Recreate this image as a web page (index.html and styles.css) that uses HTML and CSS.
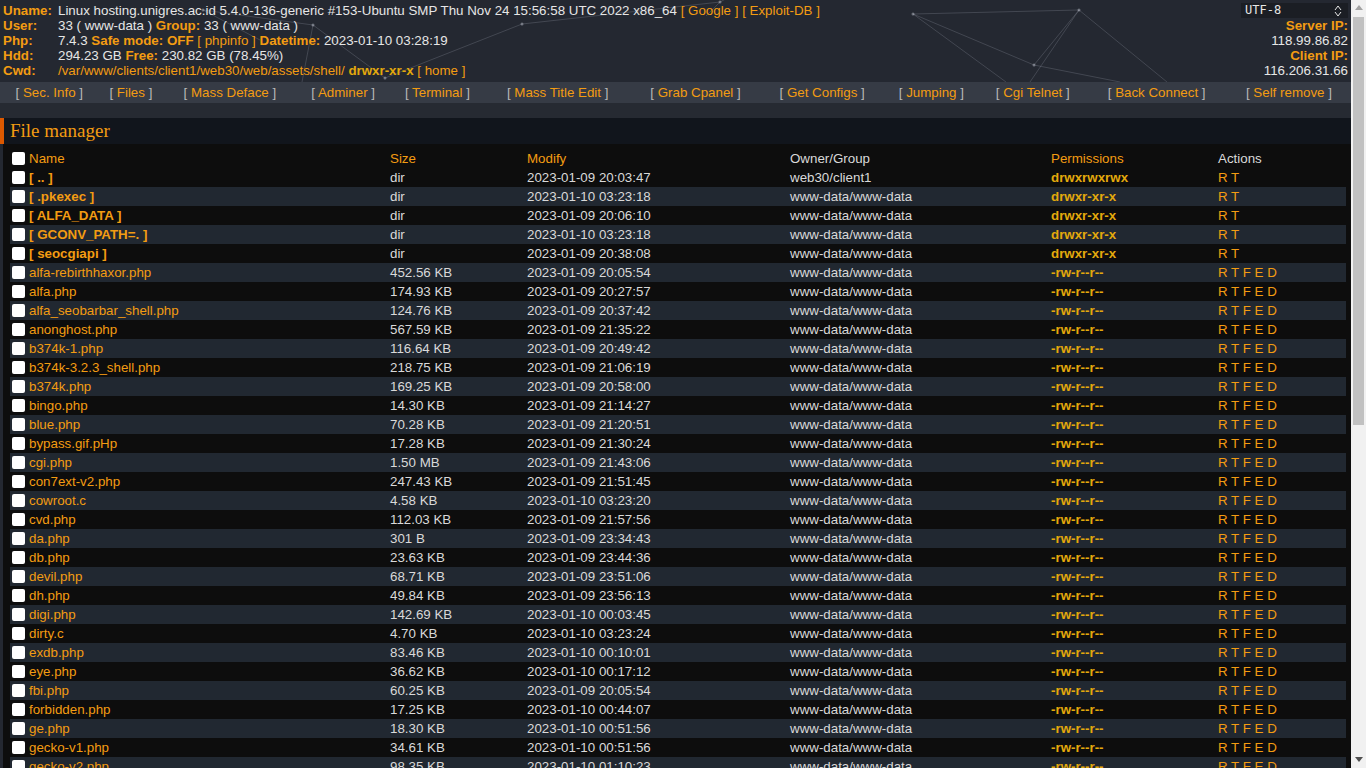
FILE: index.html
```html
<!DOCTYPE html>
<html lang="en">
<head>
<meta charset="utf-8">
<title>File manager</title>
<link rel="stylesheet" href="styles.css">
</head>
<body>
<div class="page">
<header class="top">
  <svg class="particles" width="1351" height="82" viewBox="0 0 1351 82">
    <g class="pl">
      <line x1="913" y1="14" x2="1079" y2="10"/>
      <line x1="913" y1="14" x2="1034" y2="65"/>
      <line x1="913" y1="14" x2="1006" y2="82"/>
      <line x1="1079" y1="10" x2="1034" y2="65"/>
      <line x1="1079" y1="10" x2="1030" y2="82"/>
      <line x1="1079" y1="10" x2="1167" y2="82"/>
      <line x1="1034" y1="65" x2="1120" y2="82"/>
      <line x1="203" y1="10" x2="313" y2="25"/>
      <line x1="313" y1="25" x2="385" y2="78"/>
      <line x1="522" y1="24" x2="385" y2="78"/>
      <line x1="313" y1="25" x2="302" y2="82"/>
      <line x1="203" y1="10" x2="260" y2="40"/>
      <line x1="720" y1="2" x2="735" y2="-6"/>
      <line x1="720" y1="2" x2="706" y2="16"/>
      <line x1="522" y1="24" x2="720" y2="2"/>
    </g>
    <g class="pd">
      <circle cx="913" cy="14" r="1.5"/>
      <circle cx="1079" cy="10" r="1.5"/>
      <circle cx="1034" cy="65" r="1.5"/>
      <circle cx="203" cy="10" r="1.5"/>
      <circle cx="313" cy="25" r="1.5"/>
      <circle cx="522" cy="24" r="1.5"/>
      <circle cx="385" cy="78" r="1.5"/>
      <circle cx="720" cy="2" r="1.5"/>
    </g>
  </svg>
  <div class="info">
    <b class="lbl">Uname:</b>
    <span>Linux hosting.unigres.ac.id 5.4.0-136-generic #153-Ubuntu SMP Thu Nov 24 15:56:58 UTC 2022 x86_64 <a href="#">[ Google ]</a> <a href="#">[ Exploit-DB ]</a></span>
    <b class="lbl">User:</b>
    <span>33 ( www-data ) <b class="lbl">Group:</b> 33 ( www-data )</span>
    <b class="lbl">Php:</b>
    <span>7.4.3 <b class="lbl">Safe mode:</b> <b class="lbl">OFF</b> <a href="#">[ phpinfo ]</a> <b class="lbl">Datetime:</b> 2023-01-10 03:28:19</span>
    <b class="lbl">Hdd:</b>
    <span>294.23 GB <b class="lbl">Free:</b> 230.82 GB (78.45%)</span>
    <b class="lbl">Cwd:</b>
    <span><a href="#">/var/www/clients/client1/web30/web/assets/shell/</a> <b class="perm">drwxr-xr-x</b> <a href="#">[ home ]</a></span>
  </div>
  <div class="side">
    <div class="charset">
      <select><option>UTF-8</option></select>
      <svg class="arrows" width="8" height="12" viewBox="0 0 8 12"><path d="M1 5 L4 1 L7 5 M1 7 L4 11 L7 7" fill="none" stroke="#e6e6e6" stroke-width="1"/></svg>
    </div>
    <b class="lbl">Server IP:</b>
    <span>118.99.86.82</span>
    <b class="lbl">Client IP:</b>
    <span>116.206.31.66</span>
  </div>
</header>

<nav class="menu">
  <a href="#"><i>[</i> Sec. Info <i>]</i></a>
  <a href="#"><i>[</i> Files <i>]</i></a>
  <a href="#"><i>[</i> Mass Deface <i>]</i></a>
  <a href="#"><i>[</i> Adminer <i>]</i></a>
  <a href="#"><i>[</i> Terminal <i>]</i></a>
  <a href="#"><i>[</i> Mass Title Edit <i>]</i></a>
  <a href="#"><i>[</i> Grab Cpanel <i>]</i></a>
  <a href="#"><i>[</i> Get Configs <i>]</i></a>
  <a href="#"><i>[</i> Jumping <i>]</i></a>
  <a href="#"><i>[</i> Cgi Telnet <i>]</i></a>
  <a href="#"><i>[</i> Back Connect <i>]</i></a>
  <a href="#"><i>[</i> Self remove <i>]</i></a>
</nav>
<div class="spacer"></div>
<h1 class="section-title">File manager</h1>

<div class="files">
<table>
  <colgroup>
    <col class="c-name"><col class="c-size"><col class="c-mod"><col class="c-own"><col class="c-perm"><col class="c-act">
  </colgroup>
  <thead>
    <tr><th><input type="checkbox" class="chk"><a href="#">Name</a></th><th><a href="#">Size</a></th><th><a href="#">Modify</a></th><th>Owner/Group</th><th><a href="#">Permissions</a></th><th>Actions</th></tr>
  </thead>
  <tbody>
    <tr><td><input type="checkbox" class="chk"><a class="dir" href="#">[ .. ]</a></td><td>dir</td><td>2023-01-09 20:03:47</td><td>web30/client1</td><td><b class="perm">drwxrwxrwx</b></td><td><a href="#">R</a> <a href="#">T</a></td></tr>
    <tr class="alt"><td><input type="checkbox" class="chk"><a class="dir" href="#">[ .pkexec ]</a></td><td>dir</td><td>2023-01-10 03:23:18</td><td>www-data/www-data</td><td><b class="perm">drwxr-xr-x</b></td><td><a href="#">R</a> <a href="#">T</a></td></tr>
    <tr><td><input type="checkbox" class="chk"><a class="dir" href="#">[ ALFA_DATA ]</a></td><td>dir</td><td>2023-01-09 20:06:10</td><td>www-data/www-data</td><td><b class="perm">drwxr-xr-x</b></td><td><a href="#">R</a> <a href="#">T</a></td></tr>
    <tr class="alt"><td><input type="checkbox" class="chk"><a class="dir" href="#">[ GCONV_PATH=. ]</a></td><td>dir</td><td>2023-01-10 03:23:18</td><td>www-data/www-data</td><td><b class="perm">drwxr-xr-x</b></td><td><a href="#">R</a> <a href="#">T</a></td></tr>
    <tr><td><input type="checkbox" class="chk"><a class="dir" href="#">[ seocgiapi ]</a></td><td>dir</td><td>2023-01-09 20:38:08</td><td>www-data/www-data</td><td><b class="perm">drwxr-xr-x</b></td><td><a href="#">R</a> <a href="#">T</a></td></tr>
    <tr class="alt"><td><input type="checkbox" class="chk"><a href="#">alfa-rebirthhaxor.php</a></td><td>452.56 KB</td><td>2023-01-09 20:05:54</td><td>www-data/www-data</td><td><b class="perm">-rw-r--r--</b></td><td><a href="#">R</a> <a href="#">T</a> <a href="#">F</a> <a href="#">E</a> <a href="#">D</a></td></tr>
    <tr><td><input type="checkbox" class="chk"><a href="#">alfa.php</a></td><td>174.93 KB</td><td>2023-01-09 20:27:57</td><td>www-data/www-data</td><td><b class="perm">-rw-r--r--</b></td><td><a href="#">R</a> <a href="#">T</a> <a href="#">F</a> <a href="#">E</a> <a href="#">D</a></td></tr>
    <tr class="alt"><td><input type="checkbox" class="chk"><a href="#">alfa_seobarbar_shell.php</a></td><td>124.76 KB</td><td>2023-01-09 20:37:42</td><td>www-data/www-data</td><td><b class="perm">-rw-r--r--</b></td><td><a href="#">R</a> <a href="#">T</a> <a href="#">F</a> <a href="#">E</a> <a href="#">D</a></td></tr>
    <tr><td><input type="checkbox" class="chk"><a href="#">anonghost.php</a></td><td>567.59 KB</td><td>2023-01-09 21:35:22</td><td>www-data/www-data</td><td><b class="perm">-rw-r--r--</b></td><td><a href="#">R</a> <a href="#">T</a> <a href="#">F</a> <a href="#">E</a> <a href="#">D</a></td></tr>
    <tr class="alt"><td><input type="checkbox" class="chk"><a href="#">b374k-1.php</a></td><td>116.64 KB</td><td>2023-01-09 20:49:42</td><td>www-data/www-data</td><td><b class="perm">-rw-r--r--</b></td><td><a href="#">R</a> <a href="#">T</a> <a href="#">F</a> <a href="#">E</a> <a href="#">D</a></td></tr>
    <tr><td><input type="checkbox" class="chk"><a href="#">b374k-3.2.3_shell.php</a></td><td>218.75 KB</td><td>2023-01-09 21:06:19</td><td>www-data/www-data</td><td><b class="perm">-rw-r--r--</b></td><td><a href="#">R</a> <a href="#">T</a> <a href="#">F</a> <a href="#">E</a> <a href="#">D</a></td></tr>
    <tr class="alt"><td><input type="checkbox" class="chk"><a href="#">b374k.php</a></td><td>169.25 KB</td><td>2023-01-09 20:58:00</td><td>www-data/www-data</td><td><b class="perm">-rw-r--r--</b></td><td><a href="#">R</a> <a href="#">T</a> <a href="#">F</a> <a href="#">E</a> <a href="#">D</a></td></tr>
    <tr><td><input type="checkbox" class="chk"><a href="#">bingo.php</a></td><td>14.30 KB</td><td>2023-01-09 21:14:27</td><td>www-data/www-data</td><td><b class="perm">-rw-r--r--</b></td><td><a href="#">R</a> <a href="#">T</a> <a href="#">F</a> <a href="#">E</a> <a href="#">D</a></td></tr>
    <tr class="alt"><td><input type="checkbox" class="chk"><a href="#">blue.php</a></td><td>70.28 KB</td><td>2023-01-09 21:20:51</td><td>www-data/www-data</td><td><b class="perm">-rw-r--r--</b></td><td><a href="#">R</a> <a href="#">T</a> <a href="#">F</a> <a href="#">E</a> <a href="#">D</a></td></tr>
    <tr><td><input type="checkbox" class="chk"><a href="#">bypass.gif.pHp</a></td><td>17.28 KB</td><td>2023-01-09 21:30:24</td><td>www-data/www-data</td><td><b class="perm">-rw-r--r--</b></td><td><a href="#">R</a> <a href="#">T</a> <a href="#">F</a> <a href="#">E</a> <a href="#">D</a></td></tr>
    <tr class="alt"><td><input type="checkbox" class="chk"><a href="#">cgi.php</a></td><td>1.50 MB</td><td>2023-01-09 21:43:06</td><td>www-data/www-data</td><td><b class="perm">-rw-r--r--</b></td><td><a href="#">R</a> <a href="#">T</a> <a href="#">F</a> <a href="#">E</a> <a href="#">D</a></td></tr>
    <tr><td><input type="checkbox" class="chk"><a href="#">con7ext-v2.php</a></td><td>247.43 KB</td><td>2023-01-09 21:51:45</td><td>www-data/www-data</td><td><b class="perm">-rw-r--r--</b></td><td><a href="#">R</a> <a href="#">T</a> <a href="#">F</a> <a href="#">E</a> <a href="#">D</a></td></tr>
    <tr class="alt"><td><input type="checkbox" class="chk"><a href="#">cowroot.c</a></td><td>4.58 KB</td><td>2023-01-10 03:23:20</td><td>www-data/www-data</td><td><b class="perm">-rw-r--r--</b></td><td><a href="#">R</a> <a href="#">T</a> <a href="#">F</a> <a href="#">E</a> <a href="#">D</a></td></tr>
    <tr><td><input type="checkbox" class="chk"><a href="#">cvd.php</a></td><td>112.03 KB</td><td>2023-01-09 21:57:56</td><td>www-data/www-data</td><td><b class="perm">-rw-r--r--</b></td><td><a href="#">R</a> <a href="#">T</a> <a href="#">F</a> <a href="#">E</a> <a href="#">D</a></td></tr>
    <tr class="alt"><td><input type="checkbox" class="chk"><a href="#">da.php</a></td><td>301 B</td><td>2023-01-09 23:34:43</td><td>www-data/www-data</td><td><b class="perm">-rw-r--r--</b></td><td><a href="#">R</a> <a href="#">T</a> <a href="#">F</a> <a href="#">E</a> <a href="#">D</a></td></tr>
    <tr><td><input type="checkbox" class="chk"><a href="#">db.php</a></td><td>23.63 KB</td><td>2023-01-09 23:44:36</td><td>www-data/www-data</td><td><b class="perm">-rw-r--r--</b></td><td><a href="#">R</a> <a href="#">T</a> <a href="#">F</a> <a href="#">E</a> <a href="#">D</a></td></tr>
    <tr class="alt"><td><input type="checkbox" class="chk"><a href="#">devil.php</a></td><td>68.71 KB</td><td>2023-01-09 23:51:06</td><td>www-data/www-data</td><td><b class="perm">-rw-r--r--</b></td><td><a href="#">R</a> <a href="#">T</a> <a href="#">F</a> <a href="#">E</a> <a href="#">D</a></td></tr>
    <tr><td><input type="checkbox" class="chk"><a href="#">dh.php</a></td><td>49.84 KB</td><td>2023-01-09 23:56:13</td><td>www-data/www-data</td><td><b class="perm">-rw-r--r--</b></td><td><a href="#">R</a> <a href="#">T</a> <a href="#">F</a> <a href="#">E</a> <a href="#">D</a></td></tr>
    <tr class="alt"><td><input type="checkbox" class="chk"><a href="#">digi.php</a></td><td>142.69 KB</td><td>2023-01-10 00:03:45</td><td>www-data/www-data</td><td><b class="perm">-rw-r--r--</b></td><td><a href="#">R</a> <a href="#">T</a> <a href="#">F</a> <a href="#">E</a> <a href="#">D</a></td></tr>
    <tr><td><input type="checkbox" class="chk"><a href="#">dirty.c</a></td><td>4.70 KB</td><td>2023-01-10 03:23:24</td><td>www-data/www-data</td><td><b class="perm">-rw-r--r--</b></td><td><a href="#">R</a> <a href="#">T</a> <a href="#">F</a> <a href="#">E</a> <a href="#">D</a></td></tr>
    <tr class="alt"><td><input type="checkbox" class="chk"><a href="#">exdb.php</a></td><td>83.46 KB</td><td>2023-01-10 00:10:01</td><td>www-data/www-data</td><td><b class="perm">-rw-r--r--</b></td><td><a href="#">R</a> <a href="#">T</a> <a href="#">F</a> <a href="#">E</a> <a href="#">D</a></td></tr>
    <tr><td><input type="checkbox" class="chk"><a href="#">eye.php</a></td><td>36.62 KB</td><td>2023-01-10 00:17:12</td><td>www-data/www-data</td><td><b class="perm">-rw-r--r--</b></td><td><a href="#">R</a> <a href="#">T</a> <a href="#">F</a> <a href="#">E</a> <a href="#">D</a></td></tr>
    <tr class="alt"><td><input type="checkbox" class="chk"><a href="#">fbi.php</a></td><td>60.25 KB</td><td>2023-01-09 20:05:54</td><td>www-data/www-data</td><td><b class="perm">-rw-r--r--</b></td><td><a href="#">R</a> <a href="#">T</a> <a href="#">F</a> <a href="#">E</a> <a href="#">D</a></td></tr>
    <tr><td><input type="checkbox" class="chk"><a href="#">forbidden.php</a></td><td>17.25 KB</td><td>2023-01-10 00:44:07</td><td>www-data/www-data</td><td><b class="perm">-rw-r--r--</b></td><td><a href="#">R</a> <a href="#">T</a> <a href="#">F</a> <a href="#">E</a> <a href="#">D</a></td></tr>
    <tr class="alt"><td><input type="checkbox" class="chk"><a href="#">ge.php</a></td><td>18.30 KB</td><td>2023-01-10 00:51:56</td><td>www-data/www-data</td><td><b class="perm">-rw-r--r--</b></td><td><a href="#">R</a> <a href="#">T</a> <a href="#">F</a> <a href="#">E</a> <a href="#">D</a></td></tr>
    <tr><td><input type="checkbox" class="chk"><a href="#">gecko-v1.php</a></td><td>34.61 KB</td><td>2023-01-10 00:51:56</td><td>www-data/www-data</td><td><b class="perm">-rw-r--r--</b></td><td><a href="#">R</a> <a href="#">T</a> <a href="#">F</a> <a href="#">E</a> <a href="#">D</a></td></tr>
    <tr class="alt"><td><input type="checkbox" class="chk"><a href="#">gecko-v2.php</a></td><td>98.35 KB</td><td>2023-01-10 01:10:23</td><td>www-data/www-data</td><td><b class="perm">-rw-r--r--</b></td><td><a href="#">R</a> <a href="#">T</a> <a href="#">F</a> <a href="#">E</a> <a href="#">D</a></td></tr>
    <tr><td><input type="checkbox" class="chk"><a href="#">gel4y.php</a></td><td>12.14 KB</td><td>2023-01-10 01:14:02</td><td>www-data/www-data</td><td><b class="perm">-rw-r--r--</b></td><td><a href="#">R</a> <a href="#">T</a> <a href="#">F</a> <a href="#">E</a> <a href="#">D</a></td></tr>
    <tr class="alt"><td><input type="checkbox" class="chk"><a href="#">haxor.php</a></td><td>45.20 KB</td><td>2023-01-10 01:20:37</td><td>www-data/www-data</td><td><b class="perm">-rw-r--r--</b></td><td><a href="#">R</a> <a href="#">T</a> <a href="#">F</a> <a href="#">E</a> <a href="#">D</a></td></tr>
    <tr><td><input type="checkbox" class="chk"><a href="#">hello.php</a></td><td>1.21 KB</td><td>2023-01-10 01:25:11</td><td>www-data/www-data</td><td><b class="perm">-rw-r--r--</b></td><td><a href="#">R</a> <a href="#">T</a> <a href="#">F</a> <a href="#">E</a> <a href="#">D</a></td></tr>
    <tr class="alt"><td><input type="checkbox" class="chk"><a href="#">idx.php</a></td><td>88.47 KB</td><td>2023-01-10 01:31:49</td><td>www-data/www-data</td><td><b class="perm">-rw-r--r--</b></td><td><a href="#">R</a> <a href="#">T</a> <a href="#">F</a> <a href="#">E</a> <a href="#">D</a></td></tr>
    <tr><td><input type="checkbox" class="chk"><a href="#">indoxploit.php</a></td><td>97.93 KB</td><td>2023-01-10 01:38:20</td><td>www-data/www-data</td><td><b class="perm">-rw-r--r--</b></td><td><a href="#">R</a> <a href="#">T</a> <a href="#">F</a> <a href="#">E</a> <a href="#">D</a></td></tr>
    <tr class="alt"><td><input type="checkbox" class="chk"><a href="#">jembut.php</a></td><td>23.10 KB</td><td>2023-01-10 01:44:05</td><td>www-data/www-data</td><td><b class="perm">-rw-r--r--</b></td><td><a href="#">R</a> <a href="#">T</a> <a href="#">F</a> <a href="#">E</a> <a href="#">D</a></td></tr>
    <tr><td><input type="checkbox" class="chk"><a href="#">kill.php</a></td><td>3.42 KB</td><td>2023-01-10 01:49:58</td><td>www-data/www-data</td><td><b class="perm">-rw-r--r--</b></td><td><a href="#">R</a> <a href="#">T</a> <a href="#">F</a> <a href="#">E</a> <a href="#">D</a></td></tr>
    <tr class="alt"><td><input type="checkbox" class="chk"><a href="#">leaf.php</a></td><td>61.77 KB</td><td>2023-01-10 01:55:30</td><td>www-data/www-data</td><td><b class="perm">-rw-r--r--</b></td><td><a href="#">R</a> <a href="#">T</a> <a href="#">F</a> <a href="#">E</a> <a href="#">D</a></td></tr>
    <tr><td><input type="checkbox" class="chk"><a href="#">lock.php</a></td><td>5.66 KB</td><td>2023-01-10 02:01:16</td><td>www-data/www-data</td><td><b class="perm">-rw-r--r--</b></td><td><a href="#">R</a> <a href="#">T</a> <a href="#">F</a> <a href="#">E</a> <a href="#">D</a></td></tr>
    <tr class="alt"><td><input type="checkbox" class="chk"><a href="#">marijuana.php</a></td><td>33.58 KB</td><td>2023-01-10 02:06:44</td><td>www-data/www-data</td><td><b class="perm">-rw-r--r--</b></td><td><a href="#">R</a> <a href="#">T</a> <a href="#">F</a> <a href="#">E</a> <a href="#">D</a></td></tr>
    <tr><td><input type="checkbox" class="chk"><a href="#">mini.php</a></td><td>9.84 KB</td><td>2023-01-10 02:12:09</td><td>www-data/www-data</td><td><b class="perm">-rw-r--r--</b></td><td><a href="#">R</a> <a href="#">T</a> <a href="#">F</a> <a href="#">E</a> <a href="#">D</a></td></tr>
    <tr class="alt"><td><input type="checkbox" class="chk"><a href="#">minishell.php</a></td><td>14.02 KB</td><td>2023-01-10 02:17:53</td><td>www-data/www-data</td><td><b class="perm">-rw-r--r--</b></td><td><a href="#">R</a> <a href="#">T</a> <a href="#">F</a> <a href="#">E</a> <a href="#">D</a></td></tr>
    <tr><td><input type="checkbox" class="chk"><a href="#">mrjn.php</a></td><td>27.41 KB</td><td>2023-01-10 02:23:31</td><td>www-data/www-data</td><td><b class="perm">-rw-r--r--</b></td><td><a href="#">R</a> <a href="#">T</a> <a href="#">F</a> <a href="#">E</a> <a href="#">D</a></td></tr>
    <tr class="alt"><td><input type="checkbox" class="chk"><a href="#">phpinfo.php</a></td><td>20 B</td><td>2023-01-10 02:28:47</td><td>www-data/www-data</td><td><b class="perm">-rw-r--r--</b></td><td><a href="#">R</a> <a href="#">T</a> <a href="#">F</a> <a href="#">E</a> <a href="#">D</a></td></tr>
    <tr><td><input type="checkbox" class="chk"><a href="#">priv.php</a></td><td>7.33 KB</td><td>2023-01-10 02:34:15</td><td>www-data/www-data</td><td><b class="perm">-rw-r--r--</b></td><td><a href="#">R</a> <a href="#">T</a> <a href="#">F</a> <a href="#">E</a> <a href="#">D</a></td></tr>
    <tr class="alt"><td><input type="checkbox" class="chk"><a href="#">r57.php</a></td><td>148.20 KB</td><td>2023-01-10 02:39:02</td><td>www-data/www-data</td><td><b class="perm">-rw-r--r--</b></td><td><a href="#">R</a> <a href="#">T</a> <a href="#">F</a> <a href="#">E</a> <a href="#">D</a></td></tr>
    <tr><td><input type="checkbox" class="chk"><a href="#">root.php</a></td><td>2.98 KB</td><td>2023-01-10 02:44:38</td><td>www-data/www-data</td><td><b class="perm">-rw-r--r--</b></td><td><a href="#">R</a> <a href="#">T</a> <a href="#">F</a> <a href="#">E</a> <a href="#">D</a></td></tr>
    <tr class="alt"><td><input type="checkbox" class="chk"><a href="#">sad.php</a></td><td>40.16 KB</td><td>2023-01-10 02:49:21</td><td>www-data/www-data</td><td><b class="perm">-rw-r--r--</b></td><td><a href="#">R</a> <a href="#">T</a> <a href="#">F</a> <a href="#">E</a> <a href="#">D</a></td></tr>
    <tr><td><input type="checkbox" class="chk"><a href="#">sanz.php</a></td><td>71.65 KB</td><td>2023-01-10 02:54:10</td><td>www-data/www-data</td><td><b class="perm">-rw-r--r--</b></td><td><a href="#">R</a> <a href="#">T</a> <a href="#">F</a> <a href="#">E</a> <a href="#">D</a></td></tr>
    <tr class="alt"><td><input type="checkbox" class="chk"><a href="#">shell.php</a></td><td>55.09 KB</td><td>2023-01-10 02:58:57</td><td>www-data/www-data</td><td><b class="perm">-rw-r--r--</b></td><td><a href="#">R</a> <a href="#">T</a> <a href="#">F</a> <a href="#">E</a> <a href="#">D</a></td></tr>
    <tr><td><input type="checkbox" class="chk"><a href="#">simple.php</a></td><td>1.87 KB</td><td>2023-01-10 03:02:33</td><td>www-data/www-data</td><td><b class="perm">-rw-r--r--</b></td><td><a href="#">R</a> <a href="#">T</a> <a href="#">F</a> <a href="#">E</a> <a href="#">D</a></td></tr>
    <tr class="alt"><td><input type="checkbox" class="chk"><a href="#">sym.php</a></td><td>11.45 KB</td><td>2023-01-10 03:06:48</td><td>www-data/www-data</td><td><b class="perm">-rw-r--r--</b></td><td><a href="#">R</a> <a href="#">T</a> <a href="#">F</a> <a href="#">E</a> <a href="#">D</a></td></tr>
    <tr><td><input type="checkbox" class="chk"><a href="#">tiny.php</a></td><td>135.80 KB</td><td>2023-01-10 03:10:26</td><td>www-data/www-data</td><td><b class="perm">-rw-r--r--</b></td><td><a href="#">R</a> <a href="#">T</a> <a href="#">F</a> <a href="#">E</a> <a href="#">D</a></td></tr>
    <tr class="alt"><td><input type="checkbox" class="chk"><a href="#">up.php</a></td><td>2.11 KB</td><td>2023-01-10 03:13:59</td><td>www-data/www-data</td><td><b class="perm">-rw-r--r--</b></td><td><a href="#">R</a> <a href="#">T</a> <a href="#">F</a> <a href="#">E</a> <a href="#">D</a></td></tr>
    <tr><td><input type="checkbox" class="chk"><a href="#">upload.php</a></td><td>4.36 KB</td><td>2023-01-10 03:16:40</td><td>www-data/www-data</td><td><b class="perm">-rw-r--r--</b></td><td><a href="#">R</a> <a href="#">T</a> <a href="#">F</a> <a href="#">E</a> <a href="#">D</a></td></tr>
    <tr class="alt"><td><input type="checkbox" class="chk"><a href="#">wp.php</a></td><td>19.72 KB</td><td>2023-01-10 03:18:05</td><td>www-data/www-data</td><td><b class="perm">-rw-r--r--</b></td><td><a href="#">R</a> <a href="#">T</a> <a href="#">F</a> <a href="#">E</a> <a href="#">D</a></td></tr>
    <tr><td><input type="checkbox" class="chk"><a href="#">wso.php</a></td><td>102.54 KB</td><td>2023-01-10 03:19:52</td><td>www-data/www-data</td><td><b class="perm">-rw-r--r--</b></td><td><a href="#">R</a> <a href="#">T</a> <a href="#">F</a> <a href="#">E</a> <a href="#">D</a></td></tr>
    <tr class="alt"><td><input type="checkbox" class="chk"><a href="#">x.php</a></td><td>8.80 KB</td><td>2023-01-10 03:21:14</td><td>www-data/www-data</td><td><b class="perm">-rw-r--r--</b></td><td><a href="#">R</a> <a href="#">T</a> <a href="#">F</a> <a href="#">E</a> <a href="#">D</a></td></tr>
    <tr><td><input type="checkbox" class="chk"><a href="#">xl.php</a></td><td>66.13 KB</td><td>2023-01-10 03:22:08</td><td>www-data/www-data</td><td><b class="perm">-rw-r--r--</b></td><td><a href="#">R</a> <a href="#">T</a> <a href="#">F</a> <a href="#">E</a> <a href="#">D</a></td></tr>
    <tr class="alt"><td><input type="checkbox" class="chk"><a href="#">zone-h.php</a></td><td>37.92 KB</td><td>2023-01-10 03:22:51</td><td>www-data/www-data</td><td><b class="perm">-rw-r--r--</b></td><td><a href="#">R</a> <a href="#">T</a> <a href="#">F</a> <a href="#">E</a> <a href="#">D</a></td></tr>
  </tbody>
</table>
</div>
</div>

<div class="scrollbar" aria-hidden="true">
  <svg class="sb-up" width="8" height="5" viewBox="0 0 8 5"><path d="M0 5 L4 0 L8 5 Z" fill="#a3a3a3"/></svg>
  <div class="sb-track"><div class="sb-thumb"></div></div>
  <svg class="sb-down" width="8" height="5" viewBox="0 0 8 5"><path d="M0 0 L8 0 L4 5 Z" fill="#505050"/></svg>
</div>
</body>
</html>
```

FILE: styles.css
```css
* { box-sizing: border-box; }
html, body { margin: 0; padding: 0; }
body {
  background: #242831;
  color: #e6e6e6;
  font-family: "Liberation Sans", Arial, sans-serif;
  font-size: 13.333px;
  line-height: 15px;
}
.page { width: 1351px; }
a { color: #f39c12; text-decoration: none; }
b { font-weight: bold; }

/* top info block */
.top {
  position: relative;
  display: flex;
  justify-content: space-between;
  height: 82px;
  padding: 3px 3px 4px 3px;
}
.particles {
  position: absolute;
  left: 0;
  top: 0;
  pointer-events: none;
}
.particles .pl line { stroke: rgba(190, 196, 208, 0.2); stroke-width: 1; }
.particles .pd circle { fill: rgba(200, 205, 215, 0.45); }

.info {
  position: relative;
  display: grid;
  grid-template-columns: 55px auto;
  white-space: nowrap;
  align-content: start;
}
.lbl { color: #f39c12; font-weight: bold; }
.perm { color: #e3a90c; font-weight: bold; }

.side {
  position: relative;
  display: flex;
  flex-direction: column;
  align-items: flex-end;
  white-space: nowrap;
}
.charset {
  position: relative;
  width: 107px;
  height: 15px;
}
.charset select {
  -webkit-appearance: none;
  appearance: none;
  display: block;
  width: 107px;
  height: 15px;
  margin: 0;
  padding: 0 0 0 4px;
  border: 0;
  border-radius: 0;
  background: #1b1e24;
  color: #e6e6e6;
  font-family: "DejaVu Sans Mono", "Liberation Mono", monospace;
  font-size: 12px;
  line-height: 15px;
}
.charset .arrows {
  position: absolute;
  right: 6px;
  top: 2px;
  pointer-events: none;
}

/* navigation: table layout spreads spare width in proportion to each item */
.menu {
  display: table;
  width: 100%;
  height: 21px;
  background: #363b45;
  white-space: nowrap;
}
.menu a {
  display: table-cell;
  vertical-align: middle;
  text-align: center;
  padding: 0 2px;
}
.menu i { font-style: normal; color: #b9b9b9; }

.spacer {
  height: 15px;
  background: #262a32;
}

.section-title {
  margin: 0;
  height: 26px;
  background: #11151c;
  border-left: 4px solid #dc5800;
  padding-left: 6px;
  font-family: "Liberation Serif", "Times New Roman", serif;
  font-weight: normal;
  font-size: 19px;
  line-height: 26px;
  color: #f39c12;
}

/* file table */
.files {
  margin-left: 3px;
  background: #0d0d0d;
  padding: 5px 5px 12px 7px;
}
.files table {
  width: 100%;
  border-collapse: collapse;
  table-layout: fixed;
}
.c-name { width: 378px; }
.c-size { width: 137px; }
.c-mod { width: 263px; }
.c-own { width: 261px; }
.c-perm { width: 167px; }
.c-act { width: 130px; }
.files th, .files td {
  height: 19px;
  padding: 0 2px;
  text-align: left;
  font-weight: normal;
  white-space: nowrap;
  overflow: hidden;
  color: #d9d9d9;
}
.files tr.alt { background: #212831; }
.files a.dir { font-weight: bold; }
.chk {
  -webkit-appearance: none;
  appearance: none;
  width: 13px;
  height: 13px;
  margin: 0 4px 0 0;
  background: #fff;
  border: 0;
  border-radius: 2px;
  vertical-align: -2px;
}

/* browser-style scrollbar drawn over the right edge */
.scrollbar {
  position: fixed;
  top: 0;
  right: 0;
  width: 15px;
  height: 100vh;
  background: #f1f1f1;
  display: flex;
  flex-direction: column;
  align-items: center;
}
.sb-up { margin-top: 5px; flex: none; }
.sb-track {
  flex: 1;
  width: 100%;
  padding: 7px 2px 0 2px;
}
.sb-thumb {
  height: 408px;
  background: #c1c1c1;
}
.sb-down { margin: 0 0 6px; flex: none; }
```
